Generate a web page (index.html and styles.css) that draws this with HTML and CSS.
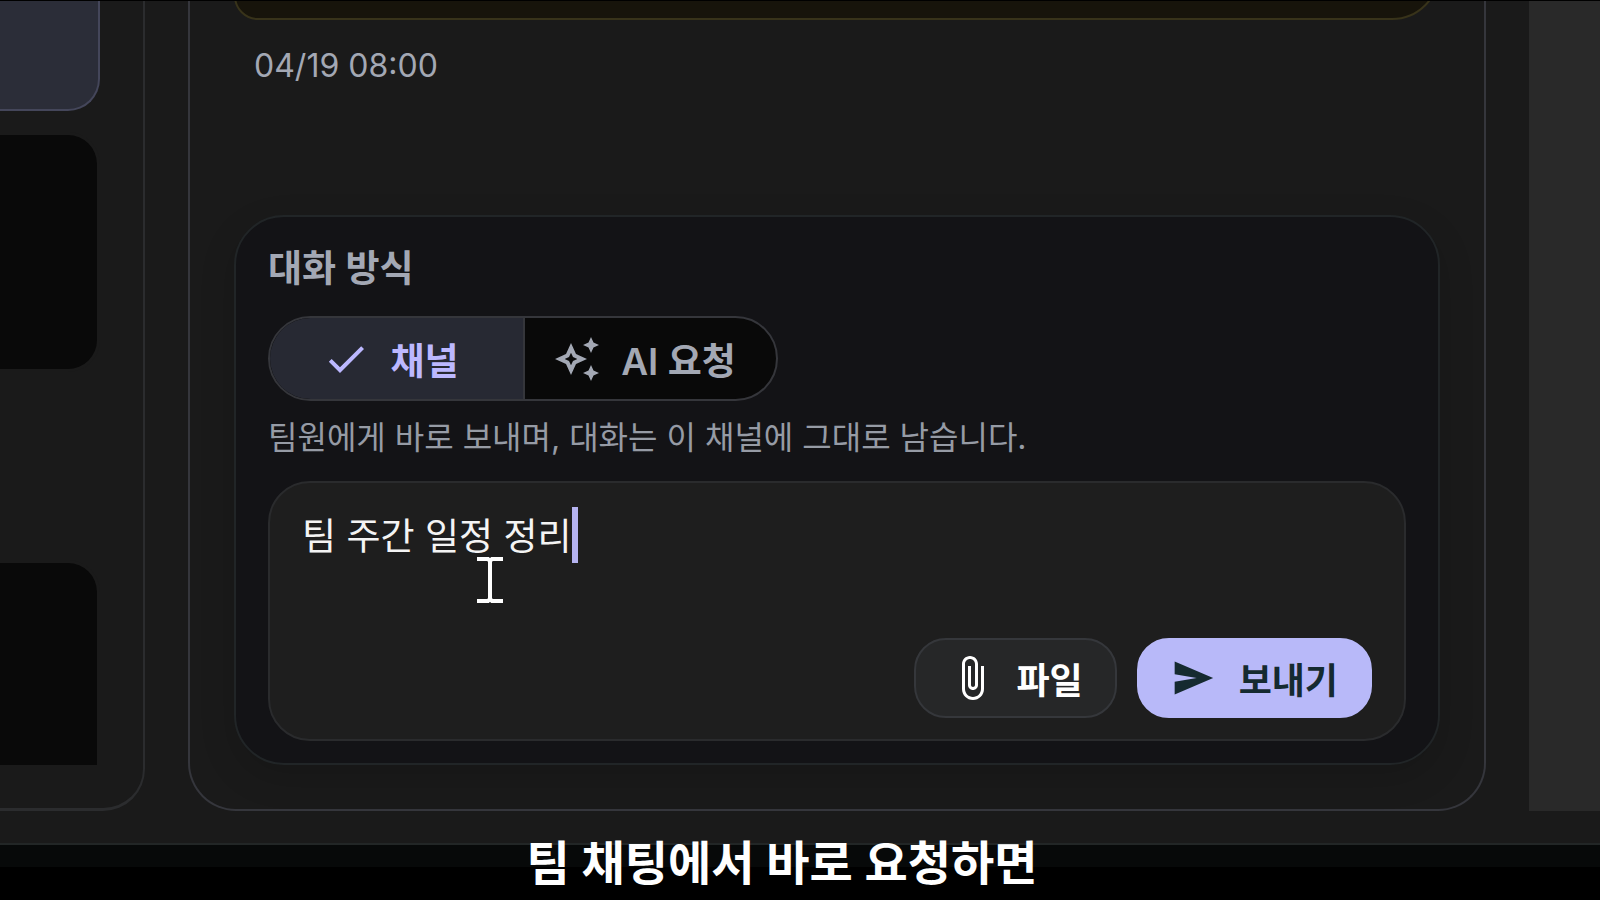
FILE: index.html
```html
<!DOCTYPE html>
<html lang="ko">
<head>
    <meta charset="UTF-8">
    <meta name="viewport" content="width=device-width, initial-scale=1.0">
    <title>팀 채팅</title>
    <link rel="stylesheet" href="styles.css">
</head>
<body>
    <div class="workspace">
        <aside class="sidebar">
            <div class="channel-list">
                <div class="channel active"></div>
                <div class="channel"></div>
                <div class="channel"></div>
            </div>
        </aside>

        <main class="chat">
            <div class="messages">
                <div class="bubble"></div>
                <time class="message-time">04/19 08:00</time>
            </div>

            <form class="composer">
                <fieldset class="mode">
                    <legend class="mode-title">대화 방식</legend>
                    <div class="segmented">
                        <label class="segment">
                            <input type="radio" name="mode" value="channel" checked>
                            <svg class="icon" viewBox="0 0 24 24" fill="currentColor"><path d="M9 16.17 4.83 12l-1.42 1.41L9 19 21 7l-1.41-1.41z"/></svg>
                            <span>채널</span>
                        </label>
                        <label class="segment">
                            <input type="radio" name="mode" value="ai">
                            <svg class="icon" viewBox="0 0 24 24" fill="currentColor"><path d="M19 9l1.25-2.75L23 5l-2.75-1.25L19 1l-1.25 2.75L15 5l2.75 1.25zM19 15l-1.25 2.75L15 19l2.75 1.25L19 23l1.25-2.75L23 19l-2.75-1.25zM11.5 9.5 9 4 6.5 9.5 1 12l5.500 2.500L9 20l2.500-5.500L17 12zM9.990 12.990 9 15.170l-.990-2.180L5.830 12l2.180-.990L9 8.830l.990 2.180 2.180.990z"/></svg>
                            <span>AI 요청</span>
                        </label>
                    </div>
                </fieldset>
                <p class="hint">팀원에게 바로 보내며, 대화는 이 채널에 그대로 남습니다.</p>

                <div class="editor">
                    <textarea class="message-input" aria-label="메시지" rows="1" spellcheck="false">팀 주간 일정 정리</textarea>
                    <span class="caret"></span>
                    <svg class="pointer" viewBox="0 0 26 46" fill="none">
                        <path d="M0 2h11l2 2 2-2h11M0 44h11l2-2 2 2h11M13 3v40" stroke="#fff" stroke-width="4"/>
                    </svg>
                    <div class="actions">
                        <button type="button" class="button file-button">
                            <svg class="icon" viewBox="0 0 24 24" fill="currentColor"><path d="M16.500 6v11.500c0 2.210-1.790 4-4 4s-4-1.790-4-4V5c0-1.380 1.120-2.500 2.500-2.500s2.500 1.120 2.500 2.500v10.500c0 .550-.450 1-1 1s-1-.450-1-1V6H10v9.500c0 1.380 1.120 2.500 2.500 2.500s2.500-1.120 2.500-2.500V5c0-2.210-1.790-4-4-4S7 2.790 7 5v12.500c0 3.040 2.460 5.500 5.500 5.500s5.500-2.460 5.500-5.500V6z"/></svg>
                            <span>파일</span>
                        </button>
                        <button type="submit" class="button send-button">
                            <svg class="icon" viewBox="0 0 24 24" fill="currentColor"><path d="M2 3v7l12 2-12 2v7l21-9z"/></svg>
                            <span>보내기</span>
                        </button>
                    </div>
                </div>
            </form>
        </main>

        <aside class="details"></aside>
    </div>

    <footer class="bottom-bar">
        <p class="caption">팀 채팅에서 바로 요청하면</p>
    </footer>
</body>
</html>
```
FILE: styles.css
```css
* {
    box-sizing: border-box;
}
body {
    margin: 0;
    height: 100vh;
    display: flex;
    flex-direction: column;
    overflow: hidden;
    border-top: 1px solid #000;
    background: #000;
    color: #a3a8b4;
    font-family: Inter, "Noto Sans CJK KR", sans-serif;
}
.workspace {
    flex: 1;
    min-height: 0;
    display: flex;
    gap: 43px;
    padding-bottom: 32px;
    overflow: hidden;
    background: #1a1a1a;
    border-bottom: 2px solid #222626;
}

/* sidebar */
.sidebar {
    flex: none;
    width: 145px;
    padding: 0 43px 43px 0;
    border-right: 2px solid #2b2c2e;
    border-bottom: 3px solid #2b2c2e;
    border-bottom-right-radius: 42px;
}
.channel-list {
    height: 100%;
    overflow: hidden;
}
.channel {
    height: 240px;
    margin-bottom: 188px;
    border: 3px solid #1a1a1a;
    border-left: 0;
    border-radius: 0 32px 32px 0;
    background: #090909;
}
.channel.active {
    height: 110px;
    margin-bottom: 21px;
    border: 2px solid #44465a;
    border-width: 0 2px 2px 0;
    border-radius: 0 0 32px 0;
    background: #2b2d38;
}

/* chat */
.chat {
    flex: 1;
    min-width: 0;
    display: flex;
    flex-direction: column;
    justify-content: space-between;
    padding: 0 44px 44px;
    border: 2px solid #35363c;
    border-top: 0;
    border-radius: 0 0 48px 48px;
}
.bubble {
    height: 80px;
    margin-top: -61px;
    border: 2px solid #38331a;
    border-radius: 24px 24px 48px 24px;
    background: #17140b;
}
.message-time {
    display: block;
    margin: 26px 20px 0;
    font-size: 32px;
    line-height: 40px;
}
.composer {
    padding: 26px 32px 22px;
    border: 2px solid #212527;
    border-radius: 50px;
    background: #131316;
    box-shadow: 0 12px 36px rgba(0, 0, 0, 0.14);
}
.mode {
    margin: 0;
    padding: 0;
    border: 0;
}
.mode-title {
    padding: 0;
    margin-bottom: 21px;
    font-size: 37px;
    line-height: 52px;
    font-weight: 600;
}
.segmented {
    display: inline-grid;
    grid-template-columns: 1fr 1fr;
    width: 510px;
    height: 85px;
    overflow: hidden;
    border: 2px solid #35363b;
    border-radius: 43px;
    background: #090909;
    vertical-align: top;
}
.segment {
    display: flex;
    align-items: center;
    justify-content: center;
    gap: 20px;
    padding-right: 12px;
    font-size: 37px;
    font-weight: 600;
    cursor: pointer;
}
.segment:has(input:checked) {
    background: #272933;
    color: #bcb8ff;
}
.segment + .segment {
    border-left: 2px solid #35363b;
}
.segment input {
    position: absolute;
    opacity: 0;
    pointer-events: none;
}
.icon {
    flex: none;
    width: 48px;
    height: 48px;
}
.hint {
    margin: 13px 0 19px;
    font-size: 32px;
    line-height: 48px;
    color: #969ba5;
}
.editor {
    position: relative;
    padding: 26px 32px 21px;
    border: 2px solid #2a2b2d;
    border-radius: 42px;
    background: #1e1e1e;
}
.message-input {
    display: block;
    width: 100%;
    height: 129px;
    padding: 0;
    border: 0;
    outline: 0;
    resize: none;
    background: transparent;
    color: #f4f4f4;
    font: 37px/56px Inter, "Noto Sans CJK KR", sans-serif;
}
.caret {
    position: absolute;
    left: 302px;
    top: 24px;
    width: 6px;
    height: 56px;
    background: #b5b3f0;
}
.pointer {
    position: absolute;
    left: 207px;
    top: 74px;
    width: 26px;
    height: 46px;
}
.actions {
    display: flex;
    justify-content: flex-end;
    gap: 20px;
}
.button {
    display: flex;
    align-items: center;
    gap: 20px;
    height: 80px;
    padding: 0 32px;
    border: 2px solid #35373b;
    border-radius: 32px;
    background: #262728;
    color: #fff;
    font-family: inherit;
    font-size: 36px;
    font-weight: 600;
    cursor: pointer;
}
.send-button {
    gap: 24px;
    border-color: #b8b9f9;
    background: #b8b9f9;
    color: #152a30;
}
.send-button .icon {
    width: 44px;
    height: 44px;
}

/* right column */
.details {
    flex: none;
    width: 71px;
    background: #292929;
}

.bottom-bar {
    position: relative;
    flex: none;
    height: 55px;
    border-top: 22px solid #070909;
}
.caption {
    position: absolute;
    left: 0;
    right: 36px;
    bottom: 0;
    margin: 0;
    text-align: center;
    color: #fff;
    font-size: 47px;
    line-height: 74px;
    font-weight: 600;
}
```
